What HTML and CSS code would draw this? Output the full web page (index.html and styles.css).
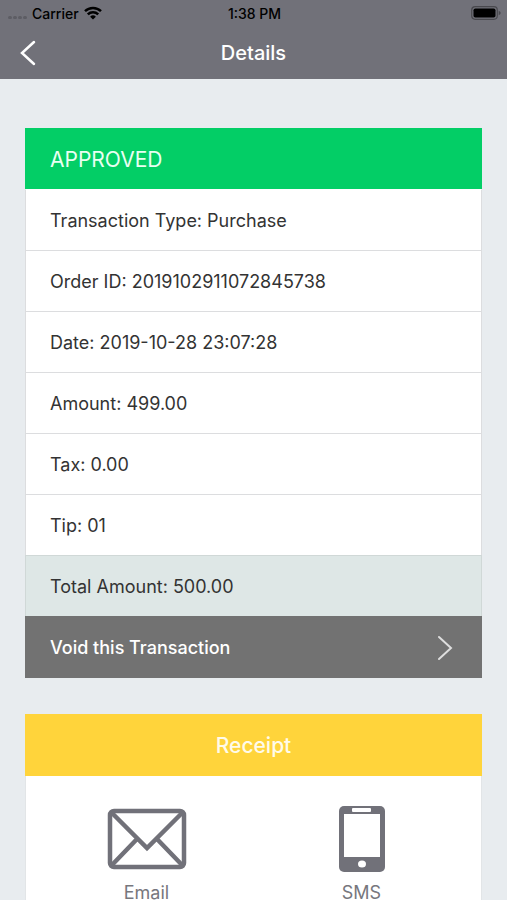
FILE: index.html
```html
<!DOCTYPE html>
<html lang="en">
<head>
  <meta charset="utf-8">
  <meta name="viewport" content="width=device-width, initial-scale=1">
  <title>Details</title>
  <link rel="stylesheet" href="styles.css">
</head>
<body>
  <header class="header">
    <div class="status">
      <div class="status-left">
        <span class="signal"><i></i><i></i><i></i><i></i></span>
        <span>Carrier</span>
        <svg class="wifi" viewBox="0 0 18 14" aria-hidden="true">
          <path d="M1 5.200a11.500 11.500 0 0 1 16 0M3.800 8.300a7.500 7.500 0 0 1 10.400 0" fill="none" stroke="#000" stroke-width="2.500"/>
          <path d="M9 13.600 6.100 10.700a4.200 4.200 0 0 1 5.800 0z"/>
        </svg>
      </div>
      <span>1:38 PM</span>
      <svg class="battery" viewBox="0 0 30 14" aria-hidden="true">
        <rect x=".7" y=".7" width="25.600" height="12.600" rx="3.500" fill="none" stroke="#49494e" stroke-width="1.200"/>
        <rect x="2.500" y="2.500" width="22" height="9" rx="1.800"/>
        <path d="M27.700 4.800q2 .8 2 2.200t-2 2.200z" fill="#49494e"/>
      </svg>
    </div>
    <div class="navbar">
      <button class="back" type="button" aria-label="Back">
        <svg viewBox="0 0 16 26" aria-hidden="true"><path d="M14 2 2 13l12 11"/></svg>
      </button>
      <h1 class="title">Details</h1>
    </div>
  </header>
  <main class="content">
    <section class="card">
      <h2 class="row approved">APPROVED</h2>
      <p class="row">Transaction Type: Purchase</p>
      <p class="row">Order ID: 2019102911072845738</p>
      <p class="row">Date: 2019-10-28 23:07:28</p>
      <p class="row">Amount: 499.00</p>
      <p class="row">Tax: 0.00</p>
      <p class="row">Tip: 01</p>
      <p class="row total">Total Amount: 500.00</p>
      <button class="row void" type="button">
        <span>Void this Transaction</span>
        <svg viewBox="0 0 16 26" aria-hidden="true"><path d="m2 2 12 11L2 24"/></svg>
      </button>
    </section>
    <section class="card">
      <h2 class="row receipt">Receipt</h2>
      <div class="options">
        <button class="option" type="button">
          <svg class="mail" viewBox="0 0 80 68" aria-hidden="true">
            <rect x="3" y="6" width="74" height="56" rx="4"/>
            <path d="m4 7 36 36L76 7M4 61l26-27M76 61 50 34"/>
          </svg>
          <span>Email</span>
        </button>
        <button class="option" type="button">
          <svg class="phone" viewBox="0 0 46 68" aria-hidden="true">
            <rect y="1" width="46" height="66" rx="5" fill="#717179"/>
            <rect x="13" y="3" width="19" height="4" rx="1" fill="#fff"/>
            <path d="M5 9h36v43H5z" fill="#fff"/>
            <ellipse cx="23" cy="59" rx="4" ry="3.500" fill="#fff"/>
          </svg>
          <span>SMS</span>
        </button>
      </div>
    </section>
  </main>
</body>
</html>
```
FILE: styles.css
```css
* {
  box-sizing: border-box;
}

body {
  display: flex;
  flex-direction: column;
  height: 100vh;
  margin: 0;
  background: #e8ecef;
  color: #333;
  font-family: Inter, "Liberation Sans", sans-serif;
  font-size: 18px;
}

button {
  border: 0;
  background: none;
  font: inherit;
  cursor: pointer;
}

.header {
  flex: none;
  background: #717179;
}

.status {
  display: grid;
  grid-template-columns: 1fr auto 1fr;
  align-items: center;
  height: 26px;
  padding: 0 6px 0 8px;
  color: #000;
  font-size: 14px;
  font-weight: 500;
}

.status-left {
  display: flex;
  align-items: center;
  gap: 5px;
}

.signal {
  display: flex;
  gap: 1px;
  padding-top: 8px;
}

.signal i {
  width: 4px;
  height: 3px;
  border-radius: 2px;
  background: #5d5d64;
}

.wifi {
  width: 18px;
  height: 14px;
}

.battery {
  justify-self: end;
  width: 30px;
  height: 14px;
}

.navbar {
  display: grid;
  grid-template-columns: 1fr auto 1fr;
  align-items: center;
  height: 53px;
  padding: 0 20px;
  color: #fff;
}

.back {
  justify-self: start;
  display: flex;
  padding: 0;
}

.back svg,
.void svg {
  width: 16px;
  height: 26px;
  fill: none;
  stroke: #fff;
  stroke-width: 2.5;
  stroke-linecap: round;
}

.title {
  margin: 0;
  font-size: 20px;
  font-weight: 500;
}

.content {
  flex: 1;
  min-height: 0;
  display: flex;
  flex-direction: column;
  gap: 36px;
  padding: 49px 25px 24px;
  overflow-y: auto;
  scrollbar-width: none;
}

.card {
  flex: none;
  background: #fff;
}

.row {
  display: flex;
  align-items: center;
  width: 100%;
  height: 61px;
  margin: 0;
  padding: 0 24px;
  border: 1px solid #dcdddf;
  border-bottom: 0;
  font-size: 18px;
  font-weight: 400;
}

.approved {
  border-color: #03ce66;
  background: #03ce66;
  color: #e9fff2;
  font-size: 21px;
}

.approved + .row {
  border-top-color: #fff;
}

.total {
  border-color: #d0d8d7;
  background: #dee7e6;
}

.void {
  justify-content: space-between;
  height: 62px;
  padding-right: 28px;
  border-color: #727272;
  background: #727272;
  color: #fff;
  font-weight: 500;
}

.void svg {
  stroke: #dedede;
  stroke-width: 2;
}

.receipt {
  justify-content: center;
  height: 62px;
  border-color: #ffd43b;
  background: #ffd43b;
  color: #fffbea;
  font-size: 21px;
  font-weight: 500;
}

.options {
  display: grid;
  grid-template-columns: 1fr 1fr;
  padding: 29px 12px 29px 13px;
  border: 1px solid #e2e5e7;
  border-top: 0;
}

.option {
  display: flex;
  flex-direction: column;
  align-items: center;
  gap: 9px;
  padding: 0;
  color: #77777d;
}

.option svg {
  height: 68px;
}

.mail {
  width: 80px;
  fill: none;
  stroke: #717179;
  stroke-width: 4.5;
}

.phone {
  width: 46px;
}
```
